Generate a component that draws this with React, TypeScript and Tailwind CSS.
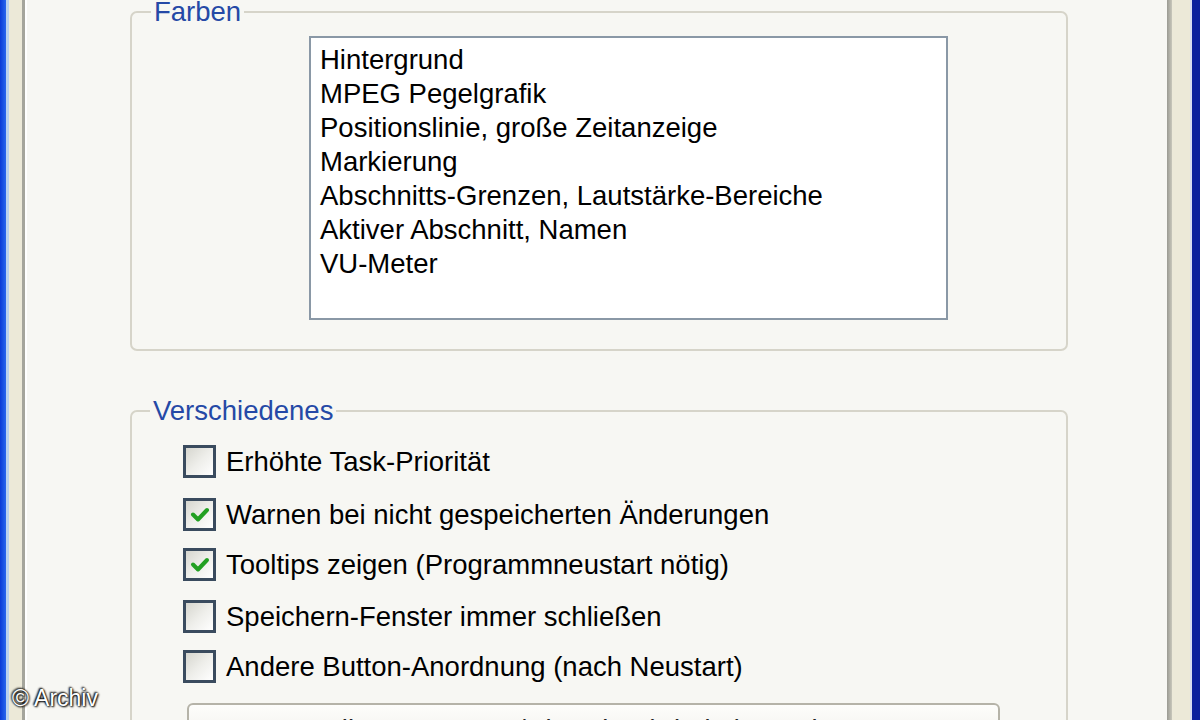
import React from "react";

const FONT = { fontFamily: '"Liberation Sans", Arial, sans-serif' };

const colors = [
  "Hintergrund",
  "MPEG Pegelgrafik",
  "Positionslinie, große Zeitanzeige",
  "Markierung",
  "Abschnitts-Grenzen, Lautstärke-Bereiche",
  "Aktiver Abschnitt, Namen",
  "VU-Meter",
];

const options: { label: string; checked: boolean; mt: string }[] = [
  { label: "Erhöhte Task-Priorität", checked: false, mt: "mt-0" },
  { label: "Warnen bei nicht gespeicherten Änderungen", checked: true, mt: "mt-[20px]" },
  { label: "Tooltips zeigen (Programmneustart nötig)", checked: true, mt: "mt-[17px]" },
  { label: "Speichern-Fenster immer schließen", checked: false, mt: "mt-[19px]" },
  { label: "Andere Button-Anordnung (nach Neustart)", checked: false, mt: "mt-[17px]" },
];

function CheckBox({ checked }: { checked: boolean }) {
  return (
    <div className="w-[33px] h-[33px] shrink-0 border-[3px] border-[#3a4b5e] bg-gradient-to-br from-[#d6d6cf] via-[#eeeeea] to-white flex items-center justify-center">
      {checked && (
        <svg width="24" height="24" viewBox="0 0 24 24">
          <path d="M5 11.5 L10 16.5 L19 7" fill="none" stroke="#22a022" strokeWidth="4" strokeLinecap="round" strokeLinejoin="round" />
        </svg>
      )}
    </div>
  );
}

export default function App() {
  return (
    <div className="w-[1200px] h-[720px] overflow-hidden flex bg-[#f7f7f3] text-[27.5px] text-black" style={FONT}>
      <div className="w-[6px] shrink-0 bg-gradient-to-r from-[#0a38d6] to-[#2a66ee]" />
      <div className="w-[3px] shrink-0 bg-[#b9d1ef]" />
      <div className="w-[13px] shrink-0 bg-[#ece9d8]" />
      <div className="w-[3px] shrink-0 bg-[#a5a59c]" />
      <div className="w-[2px] shrink-0 bg-white" />

      <main className="flex-1 relative pl-[103px] flex flex-col">
        <fieldset className="w-[938px] h-[351px] shrink-0 border-2 border-[#d6d4c9] rounded-[7px]">
          <legend className="ml-[19px] px-[3px] leading-[24px] text-[#2549a6]">Farben</legend>
          <div className="ml-[177px] mt-[12px] w-[639px] h-[284px] border-2 border-[#8a98a6] bg-white pl-[9px] pt-[5px] leading-[34px]">
            {colors.map((c) => (
              <div key={c} className="whitespace-nowrap">{c}</div>
            ))}
          </div>
        </fieldset>

        <fieldset className="mt-[48px] w-[938px] h-[400px] shrink-0 border-2 border-[#d6d4c9] rounded-[7px]">
          <legend className="ml-[18px] px-[3px] leading-[24px] text-[#2549a6]">Verschiedenes</legend>
          <div className="ml-[51px] mt-[22px] flex flex-col">
            {options.map((o) => (
              <div key={o.label} className={`flex items-center gap-[10px] h-[33px] ${o.mt}`}>
                <CheckBox checked={o.checked} />
                <span className="whitespace-nowrap leading-[33px]">{o.label}</span>
              </div>
            ))}
          </div>
          <div className="ml-[55px] mt-[20px] w-[813px] h-[60px] border-2 border-[#b5b3a8] rounded-[6px] bg-gradient-to-b from-[#fdfdfb] to-[#ecebe4] flex justify-center pt-[4px] text-[#222]">
            Alle Warnungen/Hinweise (wieder) anzeigen
          </div>
        </fieldset>

        <div
          className="absolute left-[-15px] bottom-[10px] text-[23px] leading-[24px] text-white"
          style={{ textShadow: "0 0 2px #000, 1px 1px 2px #000, -1px -1px 2px #000" }}
        >
          © Archiv
        </div>
      </main>

      <div className="w-[5px] shrink-0 bg-gradient-to-r from-[#9a9a92] to-[#c8c7bb]" />
      <div className="w-[18px] shrink-0 bg-[#ece9d8]" />
      <div className="w-[2px] shrink-0 bg-[#d8dcf0]" />
      <div className="w-[8px] shrink-0 bg-[#0b209e]" />
    </div>
  );
}
